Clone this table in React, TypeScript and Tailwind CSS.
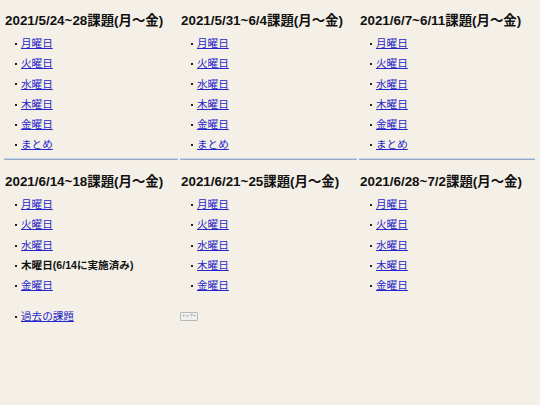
import React from "react";

type Item = { text: string; link?: boolean };

const Bullet = () => <span className="inline-block w-[2px] h-[2px] bg-[#222] mr-[4px] ml-[11px] shrink-0" />;

function Li({ item }: { item: Item }) {
  return (
    <li className="flex items-center h-[20.2px]">
      <Bullet />
      {item.link === false ? (
        <span className="text-[#111] font-bold">{item.text}</span>
      ) : (
        <a href="#" className="text-[#2626c8] underline decoration-[#2626c8]">
          {item.text}
        </a>
      )}
    </li>
  );
}

function Week({ title, items, top }: { title: string; items: Item[]; top: string }) {
  return (
    <div className="flex flex-col">
      <h3 className={`${top} px-[1px] text-[13.4px] leading-[16px] font-bold text-[#111] whitespace-nowrap`}>{title}</h3>
      <ul className="mt-[5px] text-[10.6px]">
        {items.map((it, i) => (
          <Li key={i} item={it} />
        ))}
      </ul>
    </div>
  );
}

const days5: Item[] = [
  { text: "月曜日" },
  { text: "火曜日" },
  { text: "水曜日" },
  { text: "木曜日" },
  { text: "金曜日" },
];
const days6: Item[] = [...days5, { text: "まとめ" }];

export default function App() {
  return (
    <div
      className="min-h-[405px] w-[540px] bg-[#f4f0e7] pl-[4px] pr-[5px]"
      style={{ fontFamily: '"Liberation Sans", "Noto Sans CJK JP", sans-serif' }}
    >
      <div className="grid grid-cols-[174px_177px_176px] gap-x-[2px]">
        {[
          "2021/5/24~28課題(月～金)",
          "2021/5/31~6/4課題(月～金)",
          "2021/6/7~6/11課題(月～金)",
        ].map((t) => (
          <div key={t} className="flex flex-col">
            <Week title={t} items={days6} top="mt-[13px]" />
            <div className="mt-[2.5px] h-[1px] bg-[#c2d3ee]" />
            <div className="h-[1px] bg-[#98a9c6]" />
          </div>
        ))}

        <div className="flex flex-col">
          <Week
            title="2021/6/14~18課題(月～金)"
            top="mt-[14.5px]"
            items={[
              { text: "月曜日" },
              { text: "火曜日" },
              { text: "水曜日" },
              { text: "木曜日(6/14に実施済み)", link: false },
              { text: "金曜日" },
            ]}
          />
          <ul className="mt-[10.5px] text-[10.6px]">
            <Li item={{ text: "過去の課題" }} />
          </ul>
        </div>

        <div className="flex flex-col">
          <Week title="2021/6/21~25課題(月～金)" items={days5} top="mt-[14.5px]" />
          <div className="mt-[16px]">
            <button className="h-[9px] w-[18px] border border-[#b8b8b8] bg-[#f0f0f0] rounded-[1px] text-[3.4px] leading-[7px] text-[#555] flex items-center justify-center">
              トップへ
            </button>
          </div>
        </div>

        <div className="flex flex-col">
          <Week title="2021/6/28~7/2課題(月～金)" items={days5} top="mt-[14.5px]" />
        </div>
      </div>
    </div>
  );
}
